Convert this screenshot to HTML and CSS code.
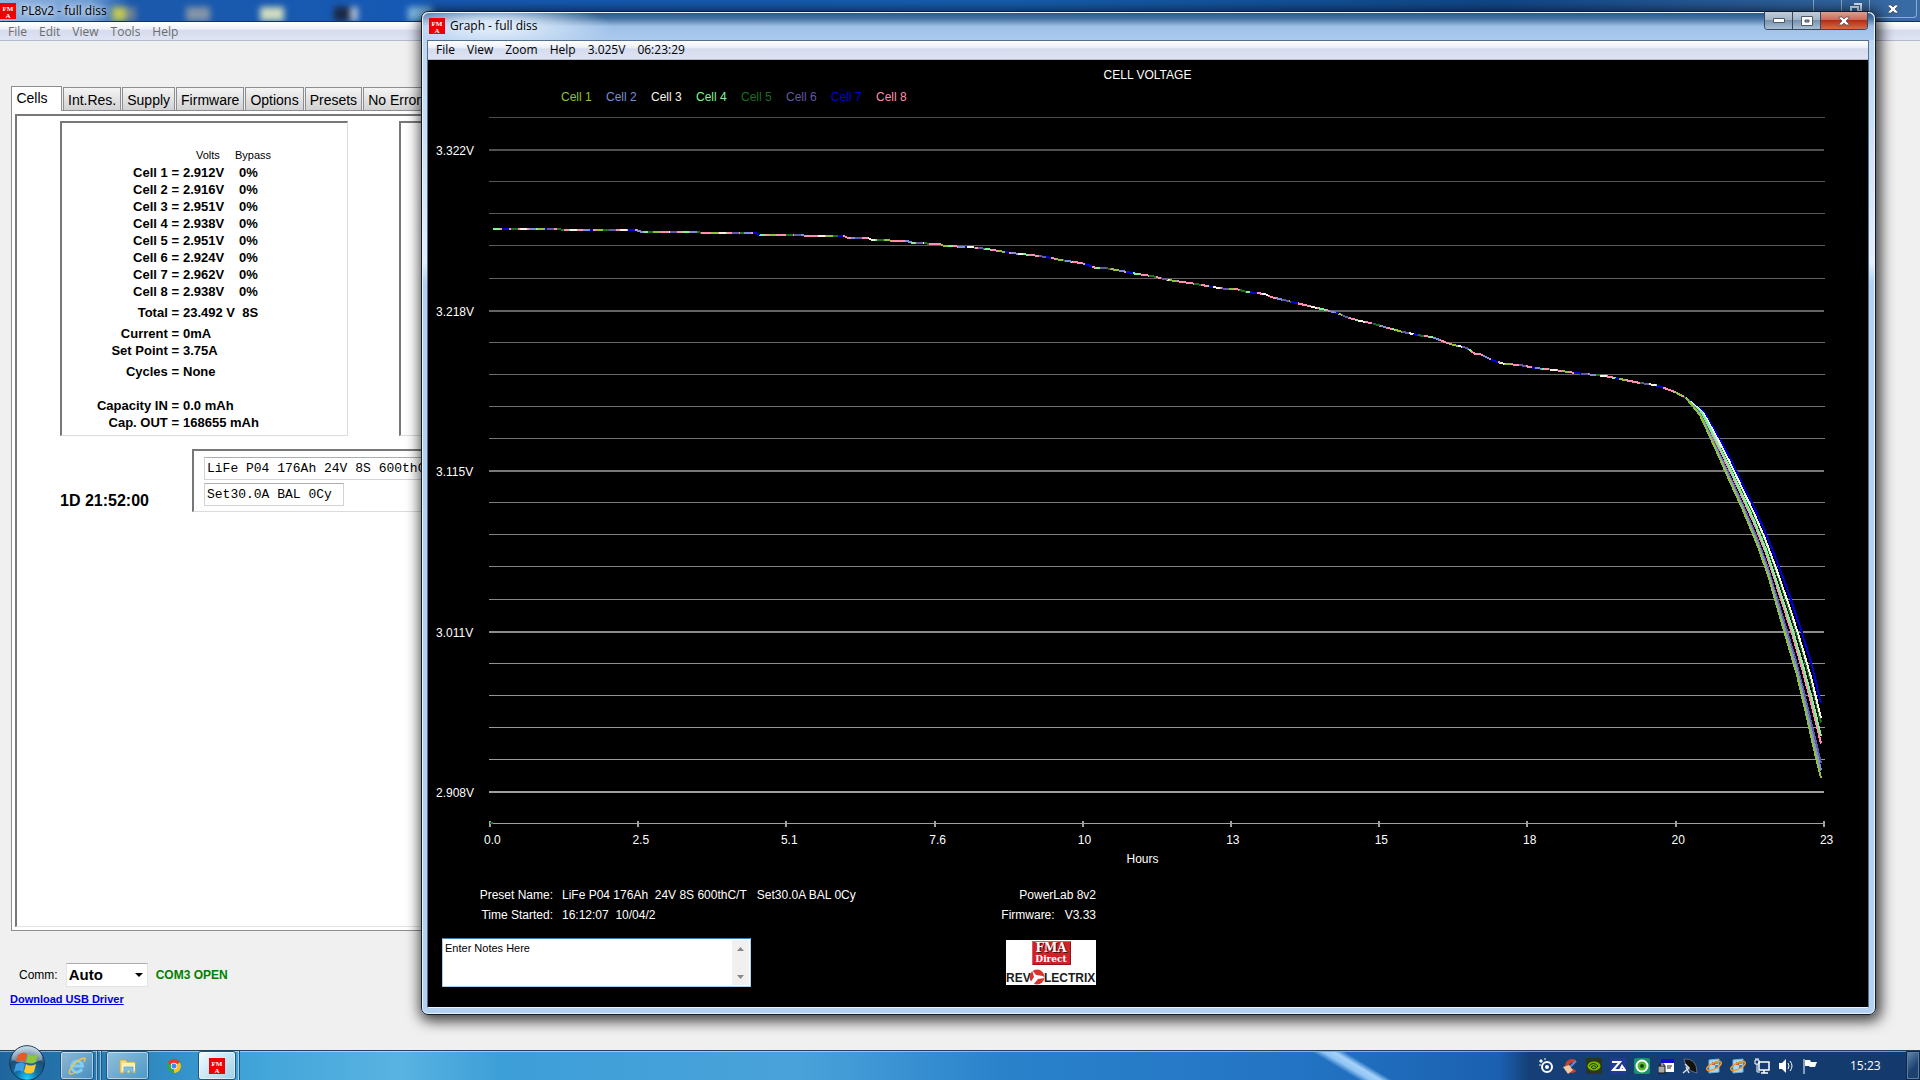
FILE: index.html
```html
<!DOCTYPE html>
<html lang="en">
<head>
  <meta charset="UTF-8">
  <meta name="viewport" content="width=device-width, initial-scale=1.0">
  <title>PL8v2 - full diss</title>
  <link rel="stylesheet" href="styles.css">
</head>
<body>
<svg class="defs" aria-hidden="true">
  <symbol id="fma" viewBox="0 0 16 16">
    <rect width="16" height="16" fill="#f00000"/>
    <text x="8" y="8" text-anchor="middle" class="fma-text">FM</text>
    <text x="8" y="15" text-anchor="middle" class="fma-text">A</text>
  </symbol>
  <symbol id="close" viewBox="0 0 12 10">
    <path d="M1 1h3l2 2 2-2h3v1L8 5l3 3v1H8L6 7 4 9H1V8l3-3-3-3z" fill="#fff" stroke="#47525f" stroke-width=".8"/>
  </symbol>
  <symbol id="updater" viewBox="0 0 16 16">
    <path d="M3 2l10-1v13l-10 1z" fill="#a9d8f2" stroke="#6fb2dc"/>
    <path d="M6 4h3v3H6z" fill="#e5533c"/><path d="M9 7h3v3H9z" fill="#3f83c4"/><path d="M9 3h3v3H9z" fill="#6bb04a"/>
    <ellipse cx="8" cy="8" rx="8" ry="3" fill="none" stroke="#ef9a2e" stroke-width="1.5" transform="rotate(-28 8 8)"/>
  </symbol>
</svg>

<main class="desktop">
  <section class="window main-window">
    <header class="main-title">
      <svg class="app-icon"><use href="#fma"/></svg>
      <h1>PL8v2 - full diss</h1>
      <div class="behind">
        <i class="blob yellow"></i><i class="blob gray"></i><i class="blob steel"></i><i class="blob pale"></i><i class="blob dark"></i><i class="blob sky"></i>
      </div>
      <div class="main-buttons">
        <button aria-label="Minimize"><svg width="12" height="10"><path d="M1 8h10v2H1z" fill="#dfe8f2"/></svg></button>
        <button aria-label="Restore"><svg width="12" height="12"><path d="M4 1h7v7h-2M1 4h7v7H1z" fill="none" stroke="#dfe8f2" stroke-width="2"/></svg></button>
        <button class="wide" aria-label="Close"><svg width="12" height="10"><use href="#close"/></svg></button>
      </div>
    </header>
    <nav class="menu inactive">
      <button>File</button><button>Edit</button><button>View</button><button>Tools</button><button>Help</button>
    </nav>

    <div class="main-content">
      <div class="tabs">
        <button class="current">Cells</button><button>Int.Res.</button><button>Supply</button><button>Firmware</button><button>Options</button><button>Presets</button><button>No Errors</button>
      </div>
      <div class="panel">
        <div class="panel-inner">
          <div class="groups">
            <div class="group">
              <table>
                <thead><tr><th></th><th>Volts</th><th>Bypass</th></tr></thead>
                <tbody>
                  <tr><th>Cell 1 =</th><td>2.912V</td><td>0%</td></tr>
                  <tr><th>Cell 2 =</th><td>2.916V</td><td>0%</td></tr>
                  <tr><th>Cell 3 =</th><td>2.951V</td><td>0%</td></tr>
                  <tr><th>Cell 4 =</th><td>2.938V</td><td>0%</td></tr>
                  <tr><th>Cell 5 =</th><td>2.951V</td><td>0%</td></tr>
                  <tr><th>Cell 6 =</th><td>2.924V</td><td>0%</td></tr>
                  <tr><th>Cell 7 =</th><td>2.962V</td><td>0%</td></tr>
                  <tr><th>Cell 8 =</th><td>2.938V</td><td>0%</td></tr>
                  <tr class="spaced"><th>Total =</th><td colspan="2">23.492 V&nbsp; 8S</td></tr>
                  <tr class="spaced"><th>Current =</th><td colspan="2">0mA</td></tr>
                  <tr><th>Set Point =</th><td colspan="2">3.75A</td></tr>
                  <tr class="spaced"><th>Cycles =</th><td colspan="2">None</td></tr>
                  <tr class="far"><th>Capacity IN =</th><td colspan="2">0.0 mAh</td></tr>
                  <tr><th>Cap. OUT =</th><td colspan="2">168655 mAh</td></tr>
                </tbody>
              </table>
            </div>
            <div class="group"></div>
          </div>
          <div class="status">
            <strong class="elapsed">1D 21:52:00</strong>
            <div class="preset">
              <input class="preset-name" aria-label="Preset name" value="LiFe P04 176Ah 24V 8S 600thC/T">
              <input class="preset-set" aria-label="Preset settings" value="Set30.0A BAL 0Cy">
            </div>
          </div>
        </div>
      </div>
      <div class="comm">
        <label for="port">Comm:</label>
        <span class="select"><select id="port"><option>Auto</option></select></span>
        <span class="open">COM3 OPEN</span>
      </div>
      <a class="driver" href="#driver">Download USB Driver</a>
    </div>
  </section>

  <section class="window graph-window">
    <header class="graph-title">
      <svg class="app-icon"><use href="#fma"/></svg>
      <h2>Graph - full diss</h2>
      <div class="graph-buttons">
        <button aria-label="Minimize"><svg width="12" height="5"><path d="M.5.5h11v4H.5z" fill="#fff" stroke="#4d5a6a"/></svg></button>
        <button aria-label="Maximize"><svg width="12" height="10"><path d="M.5.5h11v9H.5zM4 4h4v2H4z" fill="#fff" fill-rule="evenodd" stroke="#4d5a6a"/></svg></button>
        <button class="wide" aria-label="Close"><svg width="12" height="10"><use href="#close"/></svg></button>
      </div>
    </header>
    <div class="client">
      <nav class="menu">
        <button>File</button><button>View</button><button>Zoom</button><button>Help</button><span>3.025V</span><span>06:23:29</span>
      </nav>
      <div class="graph">
        <h3>CELL VOLTAGE</h3>
        <div class="legend" id="legend"></div>
        <div class="plot">
          <div class="y-labels"><span>3.322V</span><span>3.218V</span><span>3.115V</span><span>3.011V</span><span>2.908V</span></div>
          <svg id="chart" viewBox="0 0 1336 712" preserveAspectRatio="none" role="img" aria-label="Cell voltage over time"></svg>
        </div>
        <div class="x-labels"><span>0.0</span><span>2.5</span><span>5.1</span><span>7.6</span><span>10</span><span>13</span><span>15</span><span>18</span><span>20</span><span>23</span></div>
        <div class="x-title">Hours</div>
        <div class="info">
          <div class="info-left">
            <dl>
              <dt>Preset Name:</dt><dd>LiFe P04 176Ah&nbsp; 24V 8S 600thC/T&nbsp;&nbsp; Set30.0A BAL 0Cy</dd>
              <dt>Time Started:</dt><dd>16:12:07&nbsp; 10/04/2</dd>
            </dl>
            <div class="notes">
              <textarea aria-label="Notes">Enter Notes Here</textarea>
              <div class="scroll">
                <button aria-label="Scroll up"><svg width="7" height="4"><path d="M0 4L3.500 0 7 4z" fill="#888"/></svg></button>
                <button aria-label="Scroll down"><svg width="7" height="4"><path d="M0 0L3.500 4 7 0z" fill="#888"/></svg></button>
              </div>
            </div>
          </div>
          <div class="info-right">
            <p>PowerLab 8v2</p>
            <p>Firmware:&nbsp;&nbsp; V3.33</p>
            <svg class="logo" viewBox="0 0 90 45" role="img" aria-label="FMA Direct Revolectrix">
              <rect width="90" height="45" fill="#fff"/>
              <rect x="26" y="1" width="39" height="24" rx="1" fill="#cf2128"/>
              <path d="M26.500 24.500V1.500H64.500" fill="none" stroke="#e2575a"/>
              <path d="M27 24.500H64.500V2" fill="none" stroke="#8d1519"/>
              <text x="46" y="13" text-anchor="middle" class="logo-fma dark">FMA</text>
              <text x="45" y="12" text-anchor="middle" class="logo-fma">FMA</text>
              <text x="45" y="22" text-anchor="middle" class="logo-direct">Direct</text>
              <text x="0" y="42" class="logo-rev">REV</text>
              <circle cx="31" cy="37" r="7.500" fill="#d8332f"/>
              <path d="M26 30l4 5 7 1 2 2-7 1-5 6-3-2 4-6z" fill="#fff"/>
              <text x="38" y="42" class="logo-rev">LECTRIX</text>
            </svg>
          </div>
        </div>
      </div>
    </div>
  </section>
</main>

<footer class="taskbar">
  <button class="start" aria-label="Start">
    <svg viewBox="0 0 36 36">
      <defs>
        <radialGradient id="orb" cx=".5" cy=".95" r=".9"><stop offset="0" stop-color="#19d3ff"/><stop offset=".35" stop-color="#1272a8"/><stop offset=".7" stop-color="#1d4c75"/><stop offset="1" stop-color="#a9c3d6"/></radialGradient>
      </defs>
      <circle cx="18" cy="18" r="17.300" fill="url(#orb)" stroke="#12324f"/>
      <path d="M3 15a15 14 0 0 1 30 0q-15 6-30 0z" fill="#fff" opacity=".35"/>
      <path d="M9 10q5-4 9-1l-2 8q-4-3-9 0z" fill="#e8592a"/>
      <path d="M19 9q4 3 10 0l-2 8q-5 3-10 0z" fill="#8cc63e"/>
      <path d="M7 19q5-3 9 0l-2 8q-4-3-9 0z" fill="#3f9be0"/>
      <path d="M17 19q4 3 10 0l-2 8q-5 3-10 0z" fill="#fdc82f"/>
    </svg>
  </button>
  <button class="task" aria-label="Internet Explorer">
    <svg width="18" height="18" viewBox="0 0 18 18">
      <path d="M14 12a5.500 5.500 0 1 1 .5-3H5" fill="none" stroke="#7fd0f7" stroke-width="3"/>
      <path d="M2 17C-1 14 8 3 16 1q2 0 0 4M2 17q3 0 6-2" fill="none" stroke="#f5c242" stroke-width="1.500"/>
    </svg>
  </button>
  <i class="stack"></i><i class="stack"></i>
  <button class="task explorer" aria-label="Explorer">
    <svg width="18" height="16" viewBox="0 0 18 16">
      <path d="M1 2h6l1 2h8v11H1z" fill="#f3dc86" stroke="#c9a94a"/><path d="M3 5h13v8H3z" fill="#fbf0b5"/>
      <path d="M5 15V9h9v6h-3v-3H8v3z" fill="#7cc0ea" stroke="#4a94c4" stroke-width=".6"/>
    </svg>
  </button>
  <button class="task plain" aria-label="Chrome">
    <svg width="14" height="14" viewBox="0 0 14 14">
      <circle cx="7" cy="7" r="7" fill="#34a353"/><path d="M7 7L1 3.500A7 7 0 0 1 13 3.500z" fill="#e33b2e"/><path d="M7 7l6-3.500A7 7 0 0 1 7 14z" fill="#fbc116"/>
      <circle cx="7" cy="7" r="3.200" fill="#fff"/><circle cx="7" cy="7" r="2.500" fill="#4486f4"/>
    </svg>
  </button>
  <button class="task active" aria-label="PL8v2"><svg class="app-icon"><use href="#fma"/></svg></button>
  <i class="stack"></i>
  <div class="tray">
    <svg viewBox="0 0 16 16"><circle cx="9" cy="9" r="5" fill="none" stroke="#fff" stroke-width="2"/><circle cx="9" cy="9" r="2" fill="#fff"/><path d="M2 2h2v2H2zM1 7h2M6 1h2" fill="#fff" stroke="#fff"/></svg>
    <svg viewBox="0 0 16 16"><path d="M13 4A5 5 0 1 0 13 12" fill="none" stroke="#c8402e" stroke-width="4"/><path d="M14 3L8 9" stroke="#5a90d0" stroke-width="2"/><path d="M1 9l6-2 4 5-5 4z" fill="#f0c9a0"/></svg>
    <svg viewBox="0 0 16 16"><rect width="16" height="16" rx="1" fill="#2b3524"/><ellipse cx="8" cy="8" rx="6.500" ry="4.500" fill="#76b900"/><path d="M3 8q4-5 9 0-4 5-7 1 3-3 5 0" fill="none" stroke="#22331a"/></svg>
    <svg viewBox="0 0 16 16"><rect width="16" height="16" fill="#24389a"/><path d="M2 4h8l-7 8h7M10 12h5l-3-4z" fill="none" stroke="#fff" stroke-width="2"/></svg>
    <svg viewBox="0 0 16 16"><rect width="16" height="16" rx="2" fill="#149468"/><circle cx="8" cy="8" r="6.500" fill="#fff"/><circle cx="8" cy="8" r="4.500" fill="#58b82c"/><circle cx="8" cy="8" r="2" fill="#154517"/></svg>
    <svg viewBox="0 0 16 16"><rect x="3" y="1" width="13" height="13" fill="#fff"/><rect x="3" y="1" width="13" height="4" fill="#1010d0"/><path d="M2 9V6h4v3M9 8h5M9 10h4" fill="none" stroke="#222"/><rect y="8" width="7" height="7" fill="#aaa" stroke="#111"/></svg>
    <svg viewBox="0 0 16 16"><path d="M2 1q13-1 13 14Q4 13 2 1z" fill="#111" stroke="#999" stroke-width=".6"/><path d="M3 6l4 4-6 5M4 9l3 6" fill="none" stroke="#ddd" stroke-width="1.500"/></svg>
    <svg><use href="#updater"/></svg>
    <svg><use href="#updater"/></svg>
    <svg viewBox="0 0 16 16"><path d="M5 4h10v8H5zM7 15h7M10 12v3" fill="none" stroke="#fff" stroke-width="1.500"/><path d="M1 2h4v4H1zM3 6v8h3M2 0v2M4 0v2" fill="none" stroke="#fff"/></svg>
    <svg viewBox="0 0 16 16"><path d="M1 5h3l4-4v14l-4-4H1z" fill="#fff"/><path d="M10 5q2 3 0 6M12 3q4 5 0 10" fill="none" stroke="#fff"/></svg>
    <svg viewBox="0 0 16 16"><path d="M2 1v15" stroke="#fff"/><path d="M3 2h5l1 2h6l-2 5H8L7 8H3z" fill="#fff"/></svg>
  </div>
  <time class="clock">15:23</time>
  <button class="show-desktop" aria-label="Show desktop"></button>
</footer>
<script src="chart.js"></script>
</body>
</html>
```
FILE: styles.css
```css
:root {
  --ui-font: "Open Sans", "Noto Sans", sans-serif;
  --form-font: "Liberation Sans", Arial, sans-serif;
}
* { box-sizing: border-box; }
body { margin: 0; height: 100vh; display: flex; flex-direction: column; overflow: hidden; background: #f0f0f0; color: #000; font: 12px/16px var(--form-font); }
h1, h2, h3, p, dl, dd { margin: 0; font-size: 12px; font-weight: normal; }
button, input, select, textarea { font: inherit; color: inherit; margin: 0; padding: 0; border: 0; background: none; border-radius: 0; }
.defs { position: absolute; width: 0; height: 0; }
.app-icon { width: 16px; height: 16px; flex: none; }
.fma-text { font: bold 7px "Liberation Serif", serif; fill: #fff; }
.desktop { flex: 1; min-height: 0; position: relative; }

/* main window */
.main-window { height: 100%; display: flex; flex-direction: column; }
.main-title { height: 22px; display: flex; align-items: center; gap: 5px; border-bottom: 1px solid #16335c; background: linear-gradient(90deg, #8fb4e0 0, #6f9cd4 90px, #1b59ab 130px, #1659b4 400px, #1660b0 1000px, #10498c 1500px, #3a6ba4 100%); overflow: hidden; }
.main-title h1 { font-family: var(--ui-font); text-shadow: 0 0 6px #fff, 0 0 8px #fff; white-space: nowrap; }
.behind { flex: 1; display: flex; gap: 50px; align-self: flex-end; filter: blur(3px); }
.blob { width: 24px; height: 14px; background: #8595a8; }
.yellow { width: 14px; background: #c3c954; }
.gray { width: 10px; margin-left: -50px; background: #6d8099; }
.pale { background: #cfdcc0; }
.dark { background: #1c2742; border-right: 8px solid #b0c0d8; }
.sky { background: #7fb8e0; }
.main-buttons { display: flex; height: 18px; align-self: flex-start; margin-right: 3px; border: 1px solid #8eaccb; border-top: 0; border-radius: 0 0 4px 4px; }
.main-buttons button { width: 28px; display: grid; place-items: center; border-right: 1px solid #8eaccb; }
.main-buttons .wide { width: 46px; border: 0; }
.menu { flex: none; height: 19px; display: flex; align-items: center; gap: 12px; padding: 0 0 1px 8px; border-bottom: 1px solid #b4b9cc; background: linear-gradient(#fff, #edf0f8 35%, #d5dcee 45%, #dfe4f3); font-family: var(--ui-font); }
.inactive { color: #6d6d6d; border-top: 1px solid #fff; padding-bottom: 0; }
.main-content { flex: 1; display: flex; flex-direction: column; padding: 45px 0 43px 11px; }
.tabs { display: flex; align-items: flex-end; gap: 1px; font-size: 14px; }
.tabs button { height: 23px; padding: 1px 4px 0; border: 1px solid #8c8e94; border-bottom: 0; background: linear-gradient(#f4f4f4, #d2d2d2); white-space: nowrap; }
.tabs .current { width: 51px; height: 25px; margin-bottom: -1px; padding: 0 9px 2px 0; background: #fff; position: relative; }
.panel { flex: 1; margin-right: 420px; padding: 3px; border: 1px solid #8c8e94; background: #fff; }
.panel-inner { height: 100%; padding: 5px 0 0 43px; border: 1px solid #e3e3e3; border-top: 2px solid #777; border-left: 2px solid #777; }
.groups { display: flex; gap: 51px; }
.group { width: 288px; height: 315px; border: 1px solid #dcdcdc; border-top: 2px solid #777; border-left: 2px solid #777; padding-top: 23px; }
table { border-collapse: collapse; font: bold 13px/17px var(--form-font); }
th, td { padding: 0; text-align: left; white-space: nowrap; }
thead th { font-size: 11px; font-weight: normal; height: 18px; padding-left: 17px; }
thead th:last-child { padding: 0; }
tbody th { width: 117px; text-align: right; }
tbody td { padding-left: 4px; width: 56px; }
.spaced th, .spaced td { padding-top: 4px; }
.far th, .far td { padding-top: 17px; }
.status { display: flex; align-items: flex-end; padding-top: 13px; }
.elapsed { width: 132px; padding-bottom: 3px; font-size: 16px; }
.preset { flex: 1; display: flex; flex-direction: column; gap: 3px; padding: 6px 10px 5px; border: 1px solid #dcdcdc; border-top: 2px solid #777; border-left: 2px solid #777; font: 13px/20px "Liberation Mono", monospace; }
.preset input { height: 23px; padding: 0 2px; border: 1px solid #d0d4da; border-top-color: #abadb3; }
.preset-set { width: 140px; }
.comm { display: flex; align-items: center; gap: 8px; height: 24px; margin: 32px 0 0 8px; }
.select { display: flex; align-items: center; width: 82px; border: 1px solid #e3e3e3; border-top-color: #abadb3; background: #fff; }
.select::after { content: ""; margin-right: 4px; border: 4px solid transparent; border-top: 4px solid #000; border-bottom: 0; }
select { appearance: none; flex: 1; height: 22px; min-width: 0; padding-left: 2px; font-size: 15px; font-weight: bold; outline: none; }
.open { color: #008000; font-weight: bold; }
.driver { align-self: flex-start; margin-top: 4px; margin-left: -1px; color: #0000e0; font-size: 11px; font-weight: bold; }

/* graph window */
.graph-window { position: absolute; top: 11px; right: 44px; bottom: 35px; left: 421px; display: flex; flex-direction: column; padding: 0 6px 6px 5px; border: 1px solid #101c2c; border-radius: 7px; background: linear-gradient(#b9d3ee, #e3eefb 25%, #b4d2f0 27%, #b4d2f0); box-shadow: inset 0 0 0 1px #eaf4ff, 2px 3px 14px 3px rgba(0,0,0,.75); }
.graph-title { height: 27px; margin: 1px -5px 0 -4px; padding: 0 0 2px 6px; display: flex; align-items: center; gap: 5px; border-radius: 6px 6px 0 0; background: radial-gradient(ellipse 120px 26px at 70px 14px, #dbe9f9 20%, transparent), linear-gradient(#285a92, #44719f 20%, #9fc1e8 50%, #abc9ee); }
.graph-title h2 { font-family: var(--ui-font); }
.graph-buttons { display: flex; height: 18px; align-self: flex-start; margin: -1px 6px 0 auto; border: 1px solid #37475c; border-top: 0; border-radius: 0 0 4px 4px; overflow: hidden; }
.graph-buttons button { width: 28px; display: grid; place-items: center; border-right: 1px solid #37475c; background: linear-gradient(#c0cdd9, #a3b5c7 45%, #7892ab 50%, #a9c1d8); }
.graph-buttons .wide { width: 46px; border: 0; background: linear-gradient(#dc9f90, #cd6a58 45%, #b52d16 50%, #d76b49); }
.client { flex: 1; min-height: 0; display: flex; flex-direction: column; border: 1px solid #54708f; border-bottom-color: #e8f3ff; background: #000; }
.graph { flex: 1; min-height: 0; display: flex; flex-direction: column; padding: 7px 0 0; color: #fff; }
.graph h3 { text-align: center; padding-right: 1px; }
.legend { display: flex; padding: 6px 0 12px 133px; }
.legend span { width: 45px; }
.plot { flex: 1; min-height: 0; display: grid; grid-template-columns: 61px 1fr; padding-right: 43px; }
.y-labels { display: flex; flex-direction: column; justify-content: space-between; padding: 26px 0 28px 8px; }
#chart { width: 100%; height: 100%; min-height: 0; shape-rendering: crispEdges; }
#chart * { vector-effect: non-scaling-stroke; fill: none; }
.x-labels { display: flex; justify-content: space-between; padding: 3px 28px 3px 56px; }
.x-labels span { width: 20px; }
.x-title { text-align: center; padding-right: 11px; }
.info { display: flex; padding: 18px 0 20px 14px; }
.info-left { width: 512px; }
dl { display: grid; grid-template-columns: 111px 1fr; line-height: 20px; column-gap: 9px; white-space: nowrap; }
dt { text-align: right; }
.notes { display: flex; width: 309px; height: 49px; margin-top: 13px; border: 1px solid #a6cdec; border-top-color: #3d7bad; background: #fff; color: #000; }
textarea { flex: 1; min-width: 0; padding: 1px 2px; resize: none; overflow: hidden; outline: none; font-size: 11px; line-height: 16px; }
.scroll { width: 17px; display: flex; flex-direction: column; justify-content: space-between; margin: 1px; background: #f0f0f0; }
.scroll button { height: 17px; display: grid; place-items: center; }
.info-right { width: 142px; text-align: right; line-height: 20px; }
.logo { display: block; width: 90px; height: 45px; margin: 15px 0 0 auto; }
.logo-fma { font: bold 12px "DejaVu Serif", serif; fill: #fff; }
.logo-fma.dark { fill: #4a1012; }
.logo-direct { font: bold 9px "DejaVu Serif", serif; fill: #fff; }
.logo-rev { font: bold 12px var(--form-font); fill: #1c1c1c; }

/* taskbar */
.taskbar { position: relative; flex: none; height: 30px; display: flex; align-items: flex-end; padding-left: 9px; border-top: 1px solid #1d4263; box-shadow: inset 0 1px 0 rgba(255,255,255,.45); background: linear-gradient(90deg, #1f659d 0, #2c86be 140px, #3fa3d8 240px, #59b3e2 400px, #3d9fd8 500px, #4aa2da 800px, #2a82cb 1000px, #2374c4 1300px, #1b60b0 1500px, #153f76 1530px, #143a6c 100%); }
/* light streak of the wallpaper behind the bar */
.taskbar::before { content: ""; position: absolute; top: 1px; bottom: 0; left: 68%; width: 92px; background: linear-gradient(31deg, transparent 38%, #8fc4f4 46%, #a5d2fa 54%, transparent 62%); }
.start { width: 36px; height: 35px; margin-right: 15px; flex: none; }
.start svg { width: 36px; height: 36px; display: block; }
.task { width: 34px; height: 29px; display: grid; place-items: center; border: 1px solid #1e5680; border-radius: 3px; box-shadow: inset 0 0 0 1px rgba(255,255,255,.5); background: linear-gradient(135deg, rgba(255,255,255,.5), rgba(255,255,255,.15)); }
.stack { width: 4px; height: 29px; border-right: 1px solid #1e5680; box-shadow: inset -1px 0 0 rgba(255,255,255,.5); }
.explorer { width: 43px; margin-left: 4px; }
.plain { width: 49px; border: 0; box-shadow: none; background: none; }
.active { width: 38px; background: linear-gradient(135deg, #f4fafd, #9fd0e8); }
.tray { display: flex; gap: 8px; margin-left: auto; padding-bottom: 6px; position: relative; }
.tray svg { width: 16px; height: 16px; }
.clock { width: 86px; padding-bottom: 6px; padding-left: 32px; color: #fff; font-family: var(--ui-font); }
.show-desktop { width: 14px; height: 29px; margin-left: 2px; border: 1px solid #0c2748; background: linear-gradient(135deg, #6288b3, #1c416e 60%); box-shadow: inset 0 0 0 1px #5c7da3; }
```
FILE: chart.js
```js
const NS = 'http://www.w3.org/2000/svg';
const COLORS = ['#92c13a', '#7b8fdc', '#f7f2e8', '#7cf596', '#1c701c', '#6259a5', '#0000dd', '#ff8fb2'];
const chart = document.getElementById('chart');
const legend = document.getElementById('legend');

// all cells follow the same curve until the knee
const flat = [
  [4,112],[71,112],[73,113],[147,113],[153,115],[210,115],[212,116],[267,116],[271,118],[314,118],[316,119],
  [355,119],[359,121],[379,121],[383,123],[418,124],[424,126],[451,127],[455,129],[481,130],[498,132],[510,134],
  [530,137],[543,138],[563,141],[571,143],[592,146],[599,148],[607,151],[616,151],[633,154],[648,157],[663,159],
  [679,163],[701,166],[724,170],[737,172],[747,172],[758,175],[776,177],[782,180],[799,184],[824,190],[837,193],
  [851,197],[857,200],[871,204],[882,206],[899,211],[914,215],[934,219],[943,220],[961,227],[978,231],[986,237],
  [991,237],[999,241],[1005,244],[1016,247],[1031,248],[1046,251],[1066,253],[1086,256],[1116,259],[1131,262],
  [1151,266],[1166,268],[1175,271],[1186,275],[1197,281]
];
// weakest and strongest cell after the knee
const low = [[1211,298],[1227,333],[1238,358],[1253,391],[1268,427],[1279,458],[1291,500],[1308,558],[1316,592],[1324,628],[1332,661]];
const high = [[1215,295],[1229,319],[1241,341],[1254,368],[1265,390],[1275,412],[1286,439],[1300,477],[1312,513],[1322,545],[1332,586]];
const spread = [0, .1, .8, .56, .74, .2, 1, .46];

function draw(tag, attrs) {
  const el = document.createElementNS(NS, tag);
  for (const k in attrs) el.setAttribute(k, attrs[k]);
  chart.appendChild(el);
}

function grid() {
  for (let i = 0; i < 22; i++) {
    const major = i % 5 === 1;
    const c = 76 + i * 4;
    const y = Math.round(i * 32.1) + (major ? 1 : .5);
    draw('path', { d: `M0 ${y}H${major ? 1335 : 1336}`, stroke: `rgb(${c},${c},${c})`, 'stroke-width': major ? 2 : 1 });
  }
  draw('path', { d: 'M0 706.5H1336', stroke: '#a0a0a0' });
  for (let i = 0; i < 10; i++) {
    draw('path', { d: `M${Math.round(i * 148.2) + 1} 704V710`, stroke: '#a0a0a0', 'stroke-width': 2 });
  }
  draw('path', { d: 'M1 706H4', stroke: '#1c701c', 'stroke-width': 2 });
}

function curves() {
  draw('polyline', { points: flat.join(' '), stroke: COLORS[7], 'stroke-width': 2 });
  // short runs of the other cells show through
  [3, 6, 4, 2, 1, 0, 5].forEach((c, k) => {
    draw('polyline', { points: flat.join(' '), stroke: COLORS[c], 'stroke-width': 2, 'stroke-dasharray': `7 ${31 + k * 4}`, 'stroke-dashoffset': -k * 9 });
  });
  [4, 6, 2, 7, 3, 5, 1, 0].forEach(c => {
    const f = spread[c];
    const pts = low.map((p, i) => [p[0] + (high[i][0] - p[0]) * f, p[1] + (high[i][1] - p[1]) * f]);
    draw('polyline', { points: [[1197, 281], ...pts].join(' '), stroke: COLORS[c], 'stroke-width': 2 });
  });
}

COLORS.forEach((c, i) => {
  const s = document.createElement('span');
  s.textContent = `Cell ${i + 1}`;
  s.style.color = c;
  legend.appendChild(s);
});
grid();
curves();
```
